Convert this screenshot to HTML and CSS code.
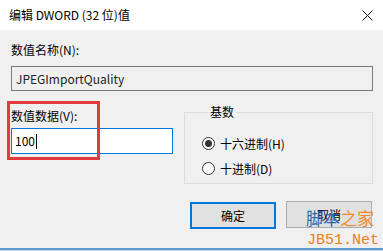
FILE: index.html
```html
<!DOCTYPE html>
<html lang="zh-CN">
<head>
  <meta charset="UTF-8" />
  <title>编辑 DWORD (32 位)值</title>
  <link rel="stylesheet" href="styles.css">
</head>
<body>
  <div class="window">
    <header class="titlebar">
      <span class="title">编辑 DWORD (32 位)值</span>
      <svg class="close" width="11" height="11" viewBox="0 0 11 11">
        <path d="M0.5 0.5 L10.5 10.5 M10.5 0.5 L0.5 10.5" stroke="#111" stroke-width="1" fill="none"/>
      </svg>
    </header>

    <main class="content">
      <div class="label">数值名称(N):</div>
      <div class="namebox">JPEGImportQuality</div>

      <div class="row">
        <div class="data-col">
          <div class="label">数值数据(V):</div>
          <div class="valuebox">100<span class="caret"></span></div>
          <div class="highlight"></div>
        </div>

        <fieldset class="base">
          <legend>基数</legend>
          <div class="radio"><span class="dot checked"></span>十六进制(H)</div>
          <div class="radio"><span class="dot"></span>十进制(D)</div>
        </fieldset>
      </div>

      <div class="buttons">
        <button class="btn default">确定</button>
        <button class="btn">取消</button>
      </div>
    </main>

    <div class="watermark">
      <div class="wm-cn"><span class="blue">脚本</span><span class="orange">之家</span></div>
      <div class="wm-en">JB51.Net</div>
    </div>

    <footer class="edge"></footer>
  </div>
</body>
</html>
```

FILE: styles.css
```css
:root {
  --bg: #f0f0f0;
  --accent: #0078d7;
  --text: #000;
  --font: "Noto Sans CJK SC", "Noto Sans", sans-serif;
}

body {
  margin: 0;
  font-family: var(--font);
  font-size: 12px;
  color: var(--text);
  background: var(--bg);
}

.window {
  position: relative;
  height: 251px;
  display: flex;
  flex-direction: column;
  overflow: hidden;
}

.titlebar {
  height: 30px;
  background: #fff;
  display: flex;
  justify-content: space-between;
  align-items: center;
  padding: 0 10px 0 9px;
}

.title {
  line-height: 16px;
}

.content {
  flex: 1;
  padding: 0 10px 0 11px;
}

.label {
  line-height: 16px;
  margin-top: 12px;
}

.namebox {
  height: 23px;
  margin-top: 8px;
  border: 1px solid #7a7a7a;
  line-height: 23px;
  padding-left: 4px;
  color: #222;
}

.row {
  display: flex;
  gap: 11px;
  margin-top: 13px;
}

.data-col {
  position: relative;
  width: 162px;
}

.data-col .label {
  margin-top: 4px;
}

.valuebox {
  height: 24px;
  margin-top: 4px;
  border: 1px solid var(--accent);
  background: #fff;
  line-height: 24px;
  padding-left: 3px;
  display: flex;
  align-items: center;
}

.caret {
  display: inline-block;
  width: 1px;
  height: 15px;
  background: #000;
  margin-left: 1px;
}

.highlight {
  position: absolute;
  left: -4px;
  top: -3px;
  width: 87px;
  height: 53px;
  border: 3px solid #e23b3f;
}

.base {
  flex: 1;
  margin: 0;
  padding: 11px 0 10px 17px;
  border: 1px solid #dcdcdc;
  height: 57px;
}

.base legend {
  padding: 0 2px;
  margin-left: 6px;
  line-height: 16px;
}

.radio {
  display: flex;
  align-items: center;
  gap: 5px;
  height: 25px;
}

.dot {
  width: 11px;
  height: 11px;
  border: 1px solid #333;
  border-radius: 50%;
  background: #fff;
  position: relative;
}

.dot.checked::after {
  content: "";
  position: absolute;
  left: 2px;
  top: 2px;
  width: 7px;
  height: 7px;
  border-radius: 50%;
  background: #333;
}

.buttons {
  display: flex;
  justify-content: flex-end;
  gap: 10px;
  margin-top: 17px;
  padding-right: 1px;
}

.btn {
  width: 86px;
  height: 27px;
  font-family: var(--font);
  font-size: 12px;
  background: #e1e1e1;
  border: 1px solid #adadad;
  padding: 0;
}

.btn.default {
  border: 2px solid var(--accent);
  margin-top: 1px;
}

.watermark {
  position: absolute;
  left: 306px;
  top: 207px;
}

.wm-cn {
  font-size: 17px;
  line-height: 22px;
  letter-spacing: 0;
}

.blue {
  color: #2b66b3;
}

.orange {
  color: #f08a2c;
}

.wm-en {
  font-family: "Liberation Mono", monospace;
  font-size: 15px;
  line-height: 16px;
  color: #f07d22;
  margin-top: 4px;
  margin-left: 1px;
}

.edge {
  height: 1px;
  border-top: 2px solid #5d9ad0;
  background: #c9d3dc;
}
```
